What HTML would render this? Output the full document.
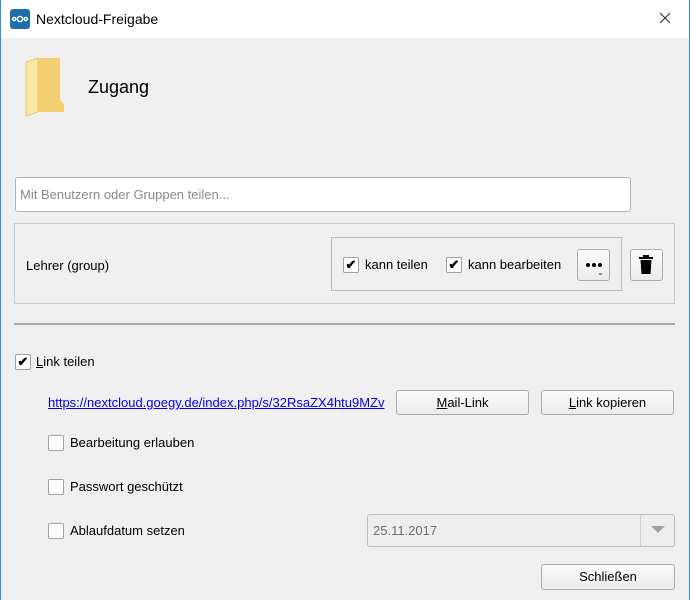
<!DOCTYPE html>
<html><head><style>
*{margin:0;padding:0;box-sizing:border-box}
body{width:690px;height:600px;background:#f0f0f0;font-family:"Liberation Sans",sans-serif;font-size:13px;color:#000;position:relative;overflow:hidden}
.a{position:absolute}
.t{position:absolute;white-space:nowrap;line-height:16px}
.cb{position:absolute;width:16px;height:16px;border:1px solid #a0a0a0;background:#fff;border-radius:2px;font-size:13px;font-weight:bold;text-align:center;line-height:14px}
.btn{position:absolute;border:1px solid #adadad;background:linear-gradient(#fbfbfb,#ececec);border-radius:3px;text-align:center;font-size:13px}
</style></head><body>
<div class="a" style="left:0;top:0;width:690px;height:38px;background:#fff"></div>
<div class="a" style="left:0;top:0;width:1px;height:600px;background:#2b8ee6"></div>
<div class="a" style="left:689px;top:0;width:1px;height:600px;background:#2b8ee6"></div>
<div class="a" style="left:10px;top:9px;width:20px;height:20px;background:#1d6fae;border-radius:3px"></div>
<svg class="a" style="left:10px;top:9px" width="20" height="20"><g fill="none" stroke="#fff" stroke-width="1.4"><circle cx="10" cy="10" r="2.6"/><circle cx="4.2" cy="10" r="1.6"/><circle cx="15.8" cy="10" r="1.6"/></g></svg>
<div class="t" style="left:36px;top:11px;font-size:14px">Nextcloud-Freigabe</div>
<svg class="a" style="left:659px;top:12px" width="12" height="12"><path d="M1 1L11 11M11 1L1 11" stroke="#333" stroke-width="1.1"/></svg>
<svg class="a" style="left:24px;top:56px" width="42" height="60"><path d="M14 2H36V44L40 48V56H14Z" fill="#f3cf72"/><path d="M2 6L14 2V56L2 60Z" fill="#fbe7a4"/><path d="M14 2L2 6V60L14 56Z" fill="none" stroke="#e6c068" stroke-width="0.8"/></svg>
<div class="t" style="left:88px;top:77px;font-size:18px;line-height:20px">Zugang</div>
<div class="a" style="left:15px;top:177px;width:616px;height:35px;background:#fff;border:1px solid #b4b4b4;border-radius:3px"></div>
<div class="t" style="left:20px;top:187px;color:#888">Mit Benutzern oder Gruppen teilen...</div>
<div class="a" style="left:14px;top:223px;width:661px;height:81px;border:1px solid #cacaca"></div>
<div class="t" style="left:26px;top:258px">Lehrer (group)</div>
<div class="a" style="left:331px;top:237px;width:291px;height:54px;border:1px solid #bcbcbc"></div>
<div class="cb" style="left:343px;top:257px">✔</div>
<div class="t" style="left:365px;top:257px">kann teilen</div>
<div class="cb" style="left:446px;top:257px">✔</div>
<div class="t" style="left:468px;top:257px">kann bearbeiten</div>
<div class="btn" style="left:577px;top:249px;width:33px;height:32px"></div>
<svg class="a" style="left:585px;top:261px" width="18" height="16"><circle cx="3" cy="4" r="2" fill="#000"/><circle cx="9" cy="4" r="2" fill="#000"/><circle cx="15" cy="4" r="2" fill="#000"/><path d="M14 13H17" stroke="#333"/></svg>
<div class="btn" style="left:630px;top:249px;width:33px;height:32px"></div>
<svg class="a" style="left:638px;top:255px" width="16" height="20"><rect x="1" y="2" width="14" height="2" fill="#000"/><rect x="5" y="0" width="6" height="2" fill="#000"/><path d="M2.5 5H13.5L12.5 19H3.5Z" fill="#000"/></svg>
<div class="a" style="left:14px;top:323px;width:661px;height:2px;background:#a8a8a8"></div>
<div class="cb" style="left:15px;top:354px">✔</div>
<div class="t" style="left:36px;top:354px"><u>L</u>ink teilen</div>
<div class="t" style="left:48px;top:395px;color:#0000ee;text-decoration:underline">https://nextcloud.goegy.de/index.php/s/32RsaZX4htu9MZv</div>
<div class="btn" style="left:396px;top:390px;width:133px;height:25px;line-height:23px"><u>M</u>ail-Link</div>
<div class="btn" style="left:541px;top:390px;width:133px;height:25px;line-height:23px"><u>L</u>ink kopieren</div>
<div class="cb" style="left:48px;top:435px"></div>
<div class="t" style="left:70px;top:435px">Bearbeitung erlauben</div>
<div class="cb" style="left:48px;top:479px"></div>
<div class="t" style="left:70px;top:479px">Passwort geschützt</div>
<div class="cb" style="left:48px;top:523px"></div>
<div class="t" style="left:70px;top:523px">Ablaufdatum setzen</div>
<div class="a" style="left:367px;top:514px;width:308px;height:33px;border:1px solid #bcbcbc;border-radius:3px;background:#eeeeee"></div>
<div class="a" style="left:640px;top:515px;width:1px;height:31px;background:#d0d0d0"></div>
<div class="t" style="left:373px;top:523px;color:#6d6d6d">25.11.2017</div>
<svg class="a" style="left:651px;top:526px" width="14" height="8"><path d="M0 0H14L7 7Z" fill="#a0a0a0"/></svg>
<div class="btn" style="left:541px;top:564px;width:134px;height:26px;line-height:24px">Schließen</div>
</body></html>
